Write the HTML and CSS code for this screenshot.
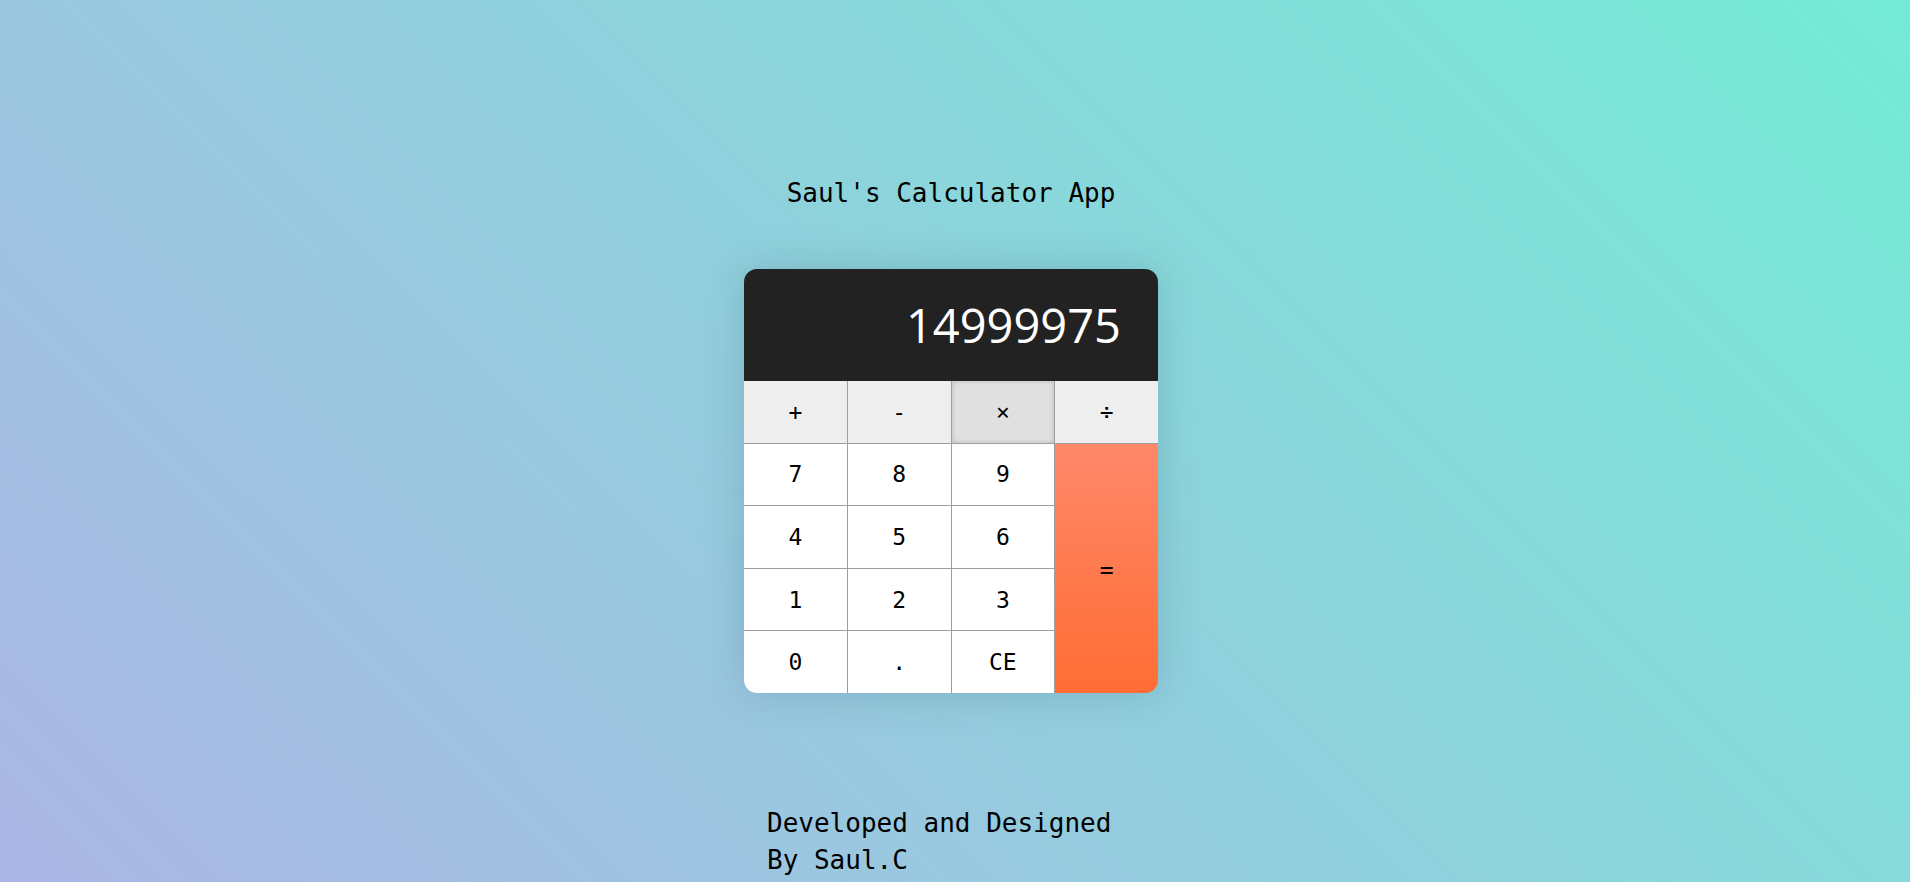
FILE: index.html
```html
<!DOCTYPE html>
<html lang="en">
<head>
<meta charset="utf-8">
<title>Saul's Calculator App</title>
<link rel="stylesheet" href="styles.css">
</head>
<body>
<main class="page">
  <h1 class="title">Saul's Calculator App</h1>
  <div class="calculator">
    <div class="display">14999975</div>
    <div class="keypad">
      <button class="key op">+</button>
      <button class="key op">-</button>
      <button class="key op active">×</button>
      <button class="key op">÷</button>
      <button class="key">7</button>
      <button class="key">8</button>
      <button class="key">9</button>
      <button class="key equals">=</button>
      <button class="key">4</button>
      <button class="key">5</button>
      <button class="key">6</button>
      <button class="key">1</button>
      <button class="key">2</button>
      <button class="key">3</button>
      <button class="key">0</button>
      <button class="key">.</button>
      <button class="key">CE</button>
    </div>
  </div>
  <footer class="credit">Developed and Designed By Saul.C</footer>
</main>
</body>
</html>
```

FILE: styles.css
```css
html, body {
  margin: 0;
  padding: 0;
}

body {
  min-height: 100vh;
  background: linear-gradient(45deg, #acb6e5, #74ebd5);
  font-family: "DejaVu Sans Mono", "Liberation Mono", monospace;
  color: #000;
}

.page {
  display: flex;
  flex-direction: column;
  align-items: center;
  padding: 178px 8px 0 0;
}

.title {
  margin: 0;
  font-size: 26px;
  font-weight: normal;
  line-height: 30px;
}

.calculator {
  margin-top: 61px;
  width: 414px;
  height: 424px;
  border-radius: 13px;
  overflow: hidden;
  box-shadow: 0 0 40px rgba(40, 80, 100, 0.22);
  display: flex;
  flex-direction: column;
}

.display {
  height: 112px;
  flex: none;
  background: #222222;
  color: #ffffff;
  display: flex;
  align-items: center;
  justify-content: flex-end;
  padding-right: 37px;
  font-family: "Open Sans", "Noto Sans", sans-serif;
  font-size: 47px;
  font-weight: 500;
}

.keypad {
  flex: 1;
  display: grid;
  grid-template-columns: repeat(4, 1fr);
  grid-template-rows: repeat(5, 1fr);
  gap: 1px;
  background: #9e9e9e;
}

.key {
  border: none;
  margin: 0;
  padding: 0;
  background: #ffffff;
  font-family: "DejaVu Sans Mono", "Liberation Mono", monospace;
  font-size: 23px;
  color: #000;
}

.op {
  background: #eeeeee;
}

.op.active {
  background: #e0e0e0;
  box-shadow: inset 0 0 5px rgba(0, 0, 0, 0.18);
}

.equals {
  grid-column: 4;
  grid-row: 2 / span 4;
  padding-top: 4px;
  background: linear-gradient(to bottom, #ff886a, #ff6d34);
}

.credit {
  margin-top: 112px;
  width: 368px;
  font-size: 26px;
  line-height: 36.5px;
}
```
